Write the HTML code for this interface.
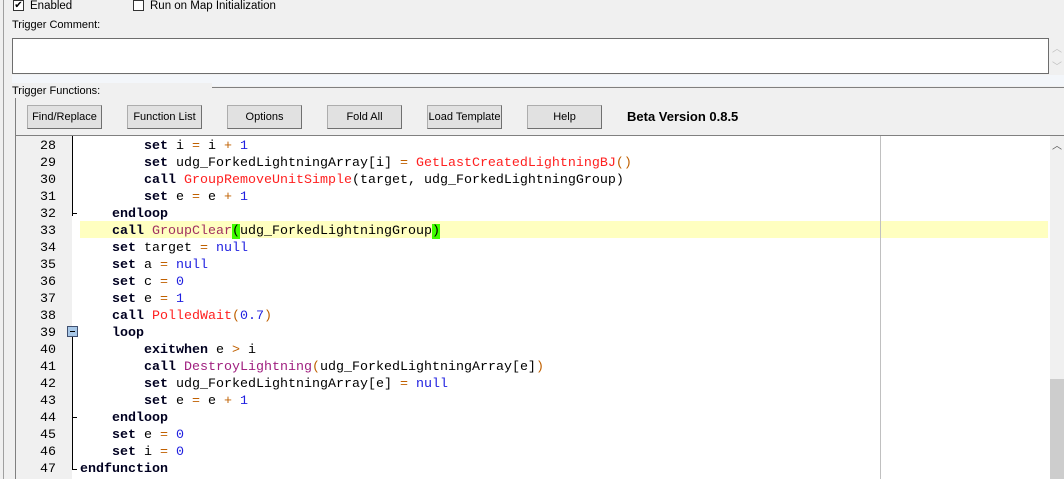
<!DOCTYPE html>
<html><head><style>
*{margin:0;padding:0;box-sizing:border-box}
body{width:1064px;height:479px;background:#f0f0f0;position:relative;overflow:hidden;font-family:"Liberation Sans",sans-serif;font-size:11px;color:#000}
.a{position:absolute}
.btn{position:absolute;top:105px;width:75px;height:24px;background:#e1e1e1;border:1px solid #adadad;border-right-color:#707070;border-bottom-color:#707070;text-align:center;line-height:22px;font-size:11px}
.code{position:absolute;left:80px;top:138px;font-family:"Liberation Mono",monospace;font-size:13.33px;line-height:17px;white-space:pre}
.num{position:absolute;left:16px;top:138px;width:40px;text-align:right;font-family:"Liberation Mono",monospace;font-size:13.33px;line-height:17px;white-space:pre}
b{font-weight:bold;color:#000020}
.o{color:#c06000}.n{color:#2020e0}.r{color:#ff2020}.p{color:#a02080}.g{color:#a03060}
.br{background:#40ff00}
</style></head><body>
<div class="a" style="left:3px;top:0;width:1px;height:479px;background:#a0a0a0"></div>
<div class="a" style="left:13px;top:0;width:11px;height:11px;border:1px solid #333;background:#fff;font-size:10px;line-height:9px;text-align:center">✔</div>
<div class="a" style="left:30px;top:0px;font-size:11.5px">Enabled</div>
<div class="a" style="left:133px;top:0;width:11px;height:11px;border:1px solid #333;background:#fff"></div>
<div class="a" style="left:150px;top:0px;font-size:11.5px">Run on Map Initialization</div>
<div class="a" style="left:12px;top:19px;font-size:11px">Trigger Comment:</div>
<div class="a" style="left:12px;top:38px;width:1037px;height:36px;background:#fff;border:1px solid #6d6d6d"></div>
<div class="a" style="left:1052px;top:40px;color:#c0c0c0;font-size:10px">︿</div>
<div class="a" style="left:1052px;top:58px;color:#c0c0c0;font-size:10px">﹀</div>
<div class="a" style="left:12px;top:75px;width:1052px;height:11px;background:#f3f6fa"></div>
<div class="a" style="left:12px;top:87px;width:1052px;height:1px;background:#808080"></div>
<div class="a" style="left:12px;top:83px;width:200px;height:10px;background:#f0f0f0"></div>
<div class="a" style="left:12px;top:85px;font-size:11px">Trigger Functions:</div>
<div class="a" style="left:15px;top:98px;width:1px;height:381px;background:#808080"></div>
<div class="btn" style="left:27px">Find/Replace</div>
<div class="btn" style="left:127px">Function List</div>
<div class="btn" style="left:227px">Options</div>
<div class="btn" style="left:327px">Fold All</div>
<div class="btn" style="left:427px">Load Template</div>
<div class="btn" style="left:527px">Help</div>
<div class="a" style="left:627px;top:109px;font-weight:bold;font-size:13px">Beta Version 0.8.5</div>
<div class="a" style="left:16px;top:135px;width:1048px;height:1px;background:#808080"></div>
<div class="a" style="left:16px;top:136px;width:57px;height:343px;background:#f0f0f0"></div>
<div class="a" style="left:72px;top:136px;width:8px;height:343px;background:#fff"></div>
<div class="a" style="left:80px;top:136px;width:970px;height:343px;background:#fff"></div>
<div class="a" style="left:80px;top:221px;width:968px;height:17px;background:#ffffc0"></div>
<div class="a" style="left:880px;top:136px;width:1px;height:343px;background:#c0c0c0"></div>
<div class="a" style="left:1050px;top:136px;width:14px;height:343px;background:#f0f0f0"></div>
<div class="a" style="left:1050px;top:379px;width:14px;height:100px;background:#cdcdcd"></div>
<div class="a" style="left:1052px;top:137px;font-size:10px;color:#555">︿</div>
<div class="a" style="left:72px;top:136px;width:1px;height:80px;background:#000"></div>
<div class="a" style="left:72px;top:213px;width:5px;height:1px;background:#000"></div>
<div class="a" style="left:72px;top:332px;width:1px;height:138px;background:#000"></div>
<div class="a" style="left:72px;top:417px;width:5px;height:1px;background:#000"></div>
<div class="a" style="left:72px;top:469px;width:5px;height:1px;background:#000"></div>
<div class="a" style="left:67px;top:326px;width:11px;height:11px;background:#a8c8e8;border:1px solid #405070"><div style="position:absolute;left:2px;top:4px;width:5px;height:1px;background:#000"></div></div>
<div class="num">28
29
30
31
32
33
34
35
36
37
38
39
40
41
42
43
44
45
46
47</div>
<div class="code">        <b>set</b> i <span class="o">=</span> i <span class="o">+</span> <span class="n">1</span>
        <b>set</b> udg_ForkedLightningArray[i] <span class="o">=</span> <span class="r">GetLastCreatedLightningBJ</span><span class="o">()</span>
        <b>call</b> <span class="r">GroupRemoveUnitSimple</span>(target, udg_ForkedLightningGroup)
        <b>set</b> e <span class="o">=</span> e <span class="o">+</span> <span class="n">1</span>
    <b>endloop</b>
    <b>call</b> <span class="g">GroupClear</span><span class="br">(</span>udg_ForkedLightningGroup<span class="br">)</span>
    <b>set</b> target <span class="o">=</span> <span class="n">null</span>
    <b>set</b> a <span class="o">=</span> <span class="n">null</span>
    <b>set</b> c <span class="o">=</span> <span class="n">0</span>
    <b>set</b> e <span class="o">=</span> <span class="n">1</span>
    <b>call</b> <span class="r">PolledWait</span><span class="o">(</span><span class="n">0.7</span><span class="o">)</span>
    <b>loop</b>
        <b>exitwhen</b> e <span class="o">&gt;</span> i
        <b>call</b> <span class="p">DestroyLightning</span><span class="o">(</span>udg_ForkedLightningArray[e]<span class="o">)</span>
        <b>set</b> udg_ForkedLightningArray[e] <span class="o">=</span> <span class="n">null</span>
        <b>set</b> e <span class="o">=</span> e <span class="o">+</span> <span class="n">1</span>
    <b>endloop</b>
    <b>set</b> e <span class="o">=</span> <span class="n">0</span>
    <b>set</b> i <span class="o">=</span> <span class="n">0</span>
<b>endfunction</b></div>
</body></html>
